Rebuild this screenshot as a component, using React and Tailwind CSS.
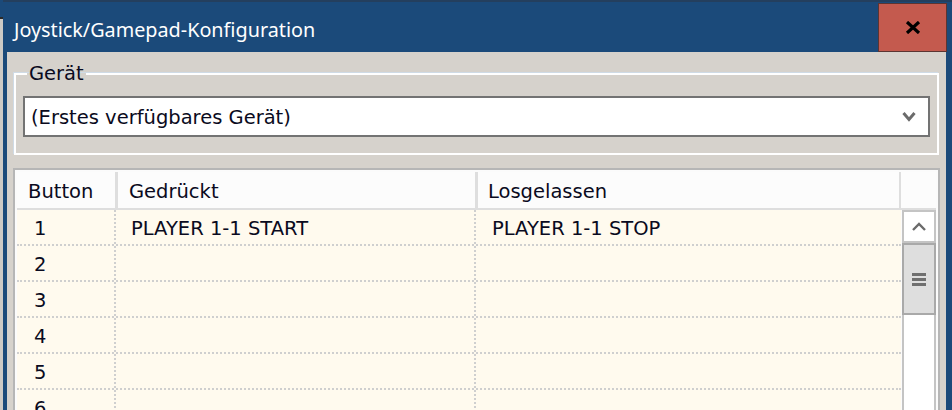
import React from "react";

const rows = [
  { n: "1", down: "PLAYER 1-1 START", up: "PLAYER 1-1 STOP" },
  { n: "2", down: "", up: "" },
  { n: "3", down: "", up: "" },
  { n: "4", down: "", up: "" },
  { n: "5", down: "", up: "" },
  { n: "6", down: "", up: "" },
];

const ui = { fontFamily: '"DejaVu Sans", Verdana, sans-serif' };

export default function App() {
  return (
    <div className="w-[952px] h-[410px] overflow-hidden flex bg-[#1b4a7a]" style={ui}>
      {/* window behind */}
      <div className="w-[3px] flex flex-col">
        <div className="h-[17px] bg-[#1b4a7a]" />
        <div className="h-[2px] bg-[#2a2a2a]" />
        <div className="flex-1 bg-[#cdcac5]" />
      </div>

      {/* dialog */}
      <div className="flex-1 flex flex-col border-t-2 border-[#243f5e] bg-[#1b4a7a]">
        {/* title bar */}
        <div className="h-[50px] flex items-start">
          <div
            className="flex-1 pl-[11px] pt-[15px] text-white text-[19.8px] leading-[26px]"
            style={{ fontFamily: '"Noto Sans", "Open Sans", sans-serif' }}
          >
            Joystick/Gamepad-Konfiguration
          </div>
          <div className="mt-[1px] mr-[5px] w-[69px] h-[49px] bg-[#c45a4e] border border-[#5b3532] flex items-center justify-center">
            <svg width="16" height="13" viewBox="0 0 16 13">
              <path d="M2 1 L14 12 M14 1 L2 12" stroke="#000" strokeWidth="3.2" />
            </svg>
          </div>
        </div>

        {/* client area */}
        <div className="flex-1 ml-[4px] mr-[6px] bg-[#d6d2cc] flex flex-col px-[7px] pt-[10px] text-[19.5px] text-[#0a0a20]">
          {/* Gerät group */}
          <fieldset className="border-2 border-white shadow-[-1px_-1px_0_#cfdbe6] px-[7px] pb-[16px] pt-[10px]">
            <legend className="ml-[4px] px-[2px] leading-[24px] text-[#0a0a20]">Gerät</legend>
            <div className="h-[41px] border-2 border-[#737373] bg-white flex items-center pl-[6px] pr-[12px]">
              <span className="flex-1 pt-[2px]">(Erstes verfügbares Gerät)</span>
              <svg width="14" height="11" viewBox="0 0 14 11">
                <path d="M1.5 2 L7 8.5 L12.5 2" stroke="#6b6b6b" strokeWidth="3" fill="none" />
              </svg>
            </div>
          </fieldset>

          {/* table */}
          <div className="mt-[13px] -mx-[1px] flex-1 border-2 border-[#b6b6b6] bg-[#fbfbfb] p-[2px] flex flex-col">
            {/* header */}
            <div className="h-[38px] flex border-b-2 border-[#dedede] bg-[#fcfcfc]">
              <div className="w-[98px] pl-[11px] pt-[3px] flex items-center">Button</div>
              <div className="w-[3px] bg-[#dedede]" />
              <div className="w-[357px] pl-[11px] pt-[3px] flex items-center">Gedrückt</div>
              <div className="w-[3px] bg-[#dedede]" />
              <div className="w-[421px] pl-[10px] pt-[3px] flex items-center">Losgelassen</div>
              <div className="w-[2px] bg-[#dedede]" />
              <div className="flex-1" />
            </div>

            {/* body */}
            <div className="flex-1 flex">
              <div className="w-[884px] bg-[#fffaee]">
                {rows.map((r) => (
                  <div key={r.n} className="h-[36px] flex border-b-2 border-dotted border-[#cfcfcf]">
                    <div className="w-[99px] pl-[17px] pt-[3px] flex items-center border-r-2 border-dotted border-[#cfcfcf]">{r.n}</div>
                    <div className="w-[360px] pl-[15px] pt-[3px] flex items-center border-r-2 border-dotted border-[#cfcfcf]">{r.down}</div>
                    <div className="flex-1 pl-[16px] pt-[3px] flex items-center">{r.up}</div>
                  </div>
                ))}
              </div>

              {/* scrollbar */}
              <div className="w-[34px] ml-[1px] border-x-2 border-[#c4c4c4] bg-white flex flex-col">
                <div className="h-[33px] border-y-2 border-[#c4c4c4] flex items-center justify-center">
                  <svg width="14" height="9" viewBox="0 0 14 9">
                    <path d="M1 8 L7 2 L13 8" stroke="#6b6b6b" strokeWidth="2.4" fill="none" />
                  </svg>
                </div>
                <div className="h-[72px] -mx-[2px] border-2 border-[#a9a9a9] bg-[#dedede] flex flex-col items-center justify-center gap-[2px]">
                  <div className="w-[14px] h-[3px] bg-[#6f6f6f]" />
                  <div className="w-[14px] h-[3px] bg-[#6f6f6f]" />
                  <div className="w-[14px] h-[3px] bg-[#6f6f6f]" />
                </div>
                <div className="flex-1" />
              </div>
            </div>
          </div>
        </div>
      </div>
    </div>
  );
}
